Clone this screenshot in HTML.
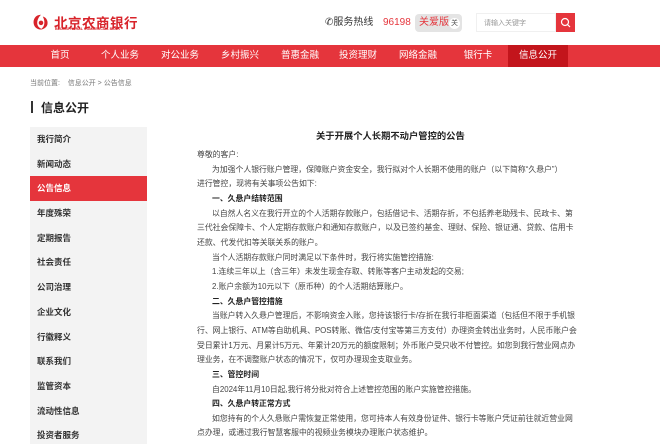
<!DOCTYPE html>
<html><head><meta charset="utf-8"><style>
*{margin:0;padding:0;box-sizing:border-box}
body{width:660px;height:444px;overflow:hidden;background:#fff;font-family:"Liberation Sans","Noto Sans CJK SC",sans-serif;color:#333;position:relative}
.a{position:absolute;white-space:nowrap}
.nav{position:absolute;left:0;top:45px;width:660px;height:22px;background:#e5353c}
.nav span{position:absolute;top:0;width:60px;height:22px;line-height:22px;text-align:center;color:#fff;font-size:9.5px}
.side{position:absolute;left:30px;top:127px;width:117px;height:317px;background:#f3f3f3}
.side div{height:24.7px;line-height:24.7px;padding-left:7px;font-size:8.5px;font-weight:bold;color:#333}
.side .on{background:#e5353c;color:#fff}
.c{position:absolute;left:197px;top:148px;width:400px;font-size:7.85px;line-height:14.65px;color:#444}
.c p{white-space:nowrap}
.i{padding-left:15px}
.b{font-weight:bold;color:#222}
</style></head><body>
<svg class="a" style="left:31px;top:12px" width="20" height="20" viewBox="0 0 22 22"><path d="M11 3 C5 3 2 8 3 13 C4 18 9 20 13 19 C9 18 6 15 7 10 C8 6 10 4 11 3Z" fill="#d8232a"/><path d="M13 5 C17 6 19 10 18 14 C17 17 14 19 11 19 C15 16 16 11 13 5Z" fill="#d8232a"/><circle cx="11" cy="12" r="2.5" fill="#d8232a"/></svg>
<div class="a" style="left:54px;top:12px;font-size:13.5px;font-weight:bold;color:#d8232a;letter-spacing:0.5px">北京农商银行</div>
<div class="a" style="left:55px;top:27px;font-size:3.6px;color:#d8232a;font-weight:bold">BEIJING RURAL COMMERCIAL BANK</div>
<div class="a" style="left:325px;top:15px;line-height:16px;font-size:10px;color:#333">&#9990;服务热线</div>
<div class="a" style="left:383px;top:15px;line-height:16px;font-size:10px;color:#e5353c">96198</div>
<div class="a" style="left:415px;top:14px;width:47px;height:18px;background:#e4e4e4;border-radius:4px"></div>
<div class="a" style="left:419px;top:15px;line-height:16px;font-size:10px;color:#e5353c">关爱版</div>
<div class="a" style="left:449px;top:18px;width:11px;height:11px;border-radius:6px;background:#fff;font-size:7px;line-height:11px;text-align:center;color:#555">关</div>
<div class="a" style="left:476px;top:13px;width:80px;height:19px;border:1px solid #f0f0f0;background:#fff"></div>
<div class="a" style="left:484px;top:18px;font-size:7px;color:#999">请输入关键字</div>
<div class="a" style="left:556px;top:13px;width:19px;height:19px;background:#e5353c"></div>
<svg class="a" style="left:560px;top:17px" width="11" height="11" viewBox="0 0 11 11"><circle cx="5" cy="5" r="3.5" fill="none" stroke="#fff" stroke-width="1.2"/><path d="M7.5 7.5L10 10" stroke="#fff" stroke-width="1.2"/></svg>
<div class="nav">
<span style="left:30px">首页</span><span style="left:90px">个人业务</span><span style="left:150px">对公业务</span><span style="left:210px">乡村振兴</span><span style="left:270px">普惠金融</span><span style="left:328px">投资理财</span><span style="left:388px">网络金融</span><span style="left:448px">银行卡</span><span style="left:508px;background:#c3151c">信息公开</span>
</div>
<div class="a" style="left:30px;top:78px;font-size:7px;color:#777">当前位置:&nbsp;&nbsp;&nbsp; 信息公开 &gt; 公告信息</div>
<div class="a" style="left:31px;top:101px;width:2px;height:12px;background:#333"></div>
<div class="a" style="left:41px;top:99px;font-size:12px;font-weight:bold;color:#222">信息公开</div>
<div class="side">
<div>我行简介</div><div>新闻动态</div><div class="on">公告信息</div><div>年度殊荣</div><div>定期报告</div><div>社会责任</div><div>公司治理</div><div>企业文化</div><div>行徽释义</div><div>联系我们</div><div>监管资本</div><div>流动性信息</div><div>投资者服务</div>
</div>
<div class="a" style="left:316px;top:128px;font-size:9.3px;font-weight:bold;color:#222">关于开展个人长期不动户管控的公告</div>
<div class="c">
<p>尊敬的客户:</p>
<p class="i">为加强个人银行账户管理，保障账户资金安全，我行拟对个人长期不使用的账户（以下简称“久悬户”）</p>
<p>进行管控，现将有关事项公告如下:</p>
<p class="i b">一、久悬户结转范围</p>
<p class="i">以自然人名义在我行开立的个人活期存款账户，包括借记卡、活期存折，不包括养老助残卡、民政卡、第</p>
<p>三代社会保障卡、个人定期存款账户和通知存款账户，以及已签约基金、理财、保险、银证通、贷款、信用卡</p>
<p>还款、代发代扣等关联关系的账户。</p>
<p class="i">当个人活期存款账户同时满足以下条件时，我行将实施管控措施:</p>
<p class="i">1.连续三年以上（含三年）未发生现金存取、转账等客户主动发起的交易;</p>
<p class="i">2.账户余额为10元以下（原币种）的个人活期结算账户。</p>
<p class="i b">二、久悬户管控措施</p>
<p class="i">当账户转入久悬户管理后，不影响资金入账，您持该银行卡/存折在我行非柜面渠道（包括但不限于手机银</p>
<p>行、网上银行、ATM等自助机具、POS转账、微信/支付宝等第三方支付）办理资金转出业务时，人民币账户会</p>
<p>受日累计1万元、月累计5万元、年累计20万元的额度限制；外币账户受只收不付管控。如您到我行营业网点办</p>
<p>理业务，在不调整账户状态的情况下，仅可办理现金支取业务。</p>
<p class="i b">三、管控时间</p>
<p class="i">自2024年11月10日起,我行将分批对符合上述管控范围的账户实施管控措施。</p>
<p class="i b">四、久悬户转正常方式</p>
<p class="i">如您持有的个人久悬账户需恢复正常使用，您可持本人有效身份证件、银行卡等账户凭证前往就近营业网</p>
<p>点办理，或通过我行智慧客服中的视频业务模块办理账户状态维护。</p>
</div>
</body></html>
